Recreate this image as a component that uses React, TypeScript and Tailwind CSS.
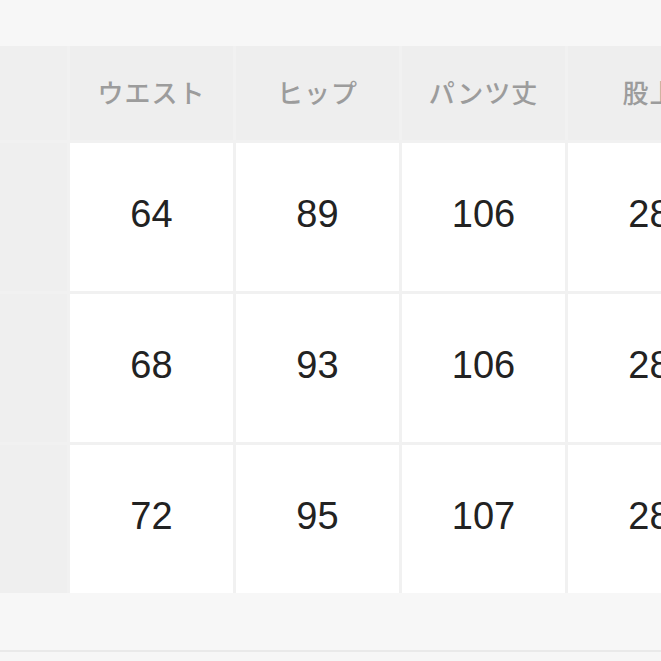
import React from 'react';

const headers = ['ウエスト', 'ヒップ', 'パンツ丈', '股上'];

const rows = [
  ['64', '89', '106', '28'],
  ['68', '93', '106', '28'],
  ['72', '95', '107', '28'],
];

const App = () => {
  return (
    <div className="w-[661px] h-[661px] overflow-hidden bg-[#f7f7f7] flex flex-col">
      <div className="h-[46px] shrink-0" />

      <div className="grid grid-cols-[67px_163px_163px_163px_163px] grid-rows-[94px_148px_148px_148px] gap-[3px] bg-[#f1f1f1] w-max shrink-0">
        <div className="bg-[#efefef]" />
        {headers.map((h) => (
          <div
            key={h}
            className="bg-[#eeeeee] flex items-center justify-center pb-[4px] text-[26px] font-medium tracking-[1px] text-[#9c9c9c] whitespace-nowrap"
            style={{ fontFamily: '"Noto Sans CJK JP", sans-serif' }}
          >
            {h}
          </div>
        ))}

        {rows.map((row, i) => (
          <React.Fragment key={i}>
            <div className="bg-[#efefef]" />
            {row.map((v, j) => (
              <div
                key={j}
                className="bg-white flex items-center justify-center pb-[5px] text-[38px] text-[#222222]"
                style={{ fontFamily: '"Liberation Sans", Arial, sans-serif' }}
              >
                {v}
              </div>
            ))}
          </React.Fragment>
        ))}
      </div>

      <div className="h-[57px] shrink-0" />
      <div className="h-[2px] bg-[#e9e9e9] shrink-0" />
      <div className="flex-1 bg-[#f6f6f6]" />
    </div>
  );
};

export default App;
